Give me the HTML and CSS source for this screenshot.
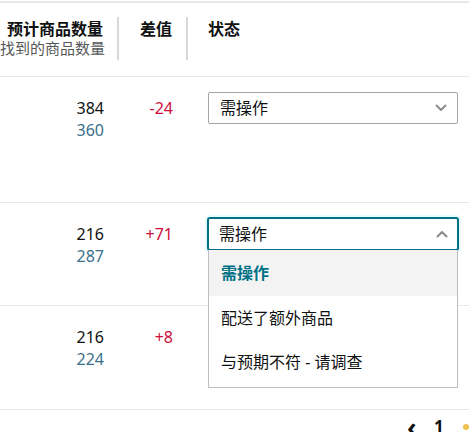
FILE: index.html
```html
<!DOCTYPE html>
<html lang="zh">
<head>
<meta charset="utf-8">
<link rel="stylesheet" href="styles.css">
</head>
<body>
<div class="table">
  <div class="row head">
    <div class="hcell"><div class="hbox"><div class="ht">预计商品数量</div><div class="hs">找到的商品数量</div></div></div>
    <div class="hcell"><div class="hbox"><div class="ht">差值</div></div></div>
    <div class="hcell status"><div class="ht">状态</div></div>
  </div>

  <div class="row r1">
    <div class="cell num"><div>384</div><div class="found">360</div></div>
    <div class="cell num"><div class="diff">-24</div></div>
    <div class="cell status">
      <div class="select">
        <span>需操作</span>
        <svg class="chev" width="12" height="8" viewBox="0 0 12 8"><path d="M1.5 1.5 L6 6 L10.5 1.5" fill="none" stroke="#8a8d8d" stroke-width="2" stroke-linecap="round" stroke-linejoin="round"/></svg>
      </div>
    </div>
  </div>

  <div class="row r2">
    <div class="cell num"><div>216</div><div class="found">287</div></div>
    <div class="cell num"><div class="diff">+71</div></div>
    <div class="cell status">
      <div class="dd">
        <div class="select open">
          <span>需操作</span>
          <svg class="chev" width="12" height="8" viewBox="0 0 12 8"><path d="M1.5 6.5 L6 2 L10.5 6.5" fill="none" stroke="#8a8d8d" stroke-width="2" stroke-linecap="round" stroke-linejoin="round"/></svg>
        </div>
        <ul class="menu">
          <li class="sel">需操作</li>
          <li>配送了额外商品</li>
          <li>与预期不符 - 请调查</li>
        </ul>
      </div>
    </div>
  </div>

  <div class="row r3">
    <div class="cell num"><div>216</div><div class="found">224</div></div>
    <div class="cell num"><div class="diff">+8</div></div>
    <div class="cell status"></div>
  </div>

  <div class="pager">
    <span class="prev">‹</span>
    <span class="page">1</span>
    <span class="next"></span>
  </div>
</div>
</body>
</html>
```

FILE: styles.css
```css
* { box-sizing: border-box; }
html, body { margin: 0; padding: 0; background: #ffffff; }
body {
  font-family: "Noto Sans", "Noto Sans CJK SC", sans-serif;
  font-size: 16px;
  color: #0f1111;
  width: 469px;
  height: 432px;
  overflow: hidden;
}
.table {
  margin-top: 1px;
  border-top: 2px solid #e7e7e7;
  width: 469px;
}
.row {
  display: grid;
  grid-template-columns: 119px 69px 1fr;
  border-bottom: 1px solid #e7e7e7;
}
.head { height: 74px; }
.r1 { height: 126px; }
.r2 { height: 103px; }
.r3 { height: 104px; }

.hcell { padding-top: 14px; }
.hbox {
  height: 43px;
  border-right: 2px solid #d5d9d9;
  padding-right: 14px;
  padding-top: 2px;
  text-align: right;
  white-space: nowrap;
}
.ht { font-weight: 700; font-size: 16px; line-height: 20px; color: #0f1111; }
.hs { font-size: 15px; line-height: 16px; color: #565959; margin-top: 1px; }
.hcell.status { padding-left: 20px; padding-top: 16px; }

.cell { padding-top: 20px; }
.num { text-align: right; padding-right: 15px; line-height: 22px; }
.found { color: #3a6f8c; }
.diff { color: #cc0c39; }
.cell.status { padding-left: 20px; padding-top: 15px; }
.r2 .cell.status { padding-top: 14px; }

.select {
  width: 250px;
  height: 32px;
  border: 1px solid #a6a6a6;
  border-radius: 2px;
  display: flex;
  align-items: center;
  justify-content: space-between;
  padding: 0 10px 0 11px;
  background: #fff;
  line-height: 20px;
}
.select.open {
  border: 2px solid #007185;
  border-radius: 3px;
  height: 34px;
  padding: 0 9px 0 10px;
  margin-left: -1px;
  width: 252px;
  box-shadow: 0 0 0 2px #e6fafd;
}
.dd { position: relative; width: 250px; }
.menu {
  position: absolute;
  top: 33px;
  left: 0;
  width: 250px;
  margin: 0;
  padding: 0 0 3px;
  list-style: none;
  background: #fff;
  border: 1px solid #bbbfbf;
  border-top: none;
  z-index: 2;
}
.menu li {
  height: 44px;
  line-height: 44px;
  padding-left: 12px;
  font-size: 16px;
  color: #0f1111;
}
.menu li.sel {
  height: 46px;
  line-height: 46px;
  background: #f3f3f3;
  color: #007185;
  font-weight: 700;
}

.pager {
  display: flex;
  justify-content: flex-end;
  align-items: center;
  height: 30px;
  padding-top: 4px;
}
.prev { font-size: 26px; font-weight: 700; width: 27px; line-height: 24px; color: #0f1111; }
.page { font-size: 17px; font-weight: 700; width: 29px; line-height: 24px; text-align: left; color: #0f1111; }
.next { width: 6px; height: 6px; border-radius: 3px; background: #f0c14b; margin-right: 0; }
```
